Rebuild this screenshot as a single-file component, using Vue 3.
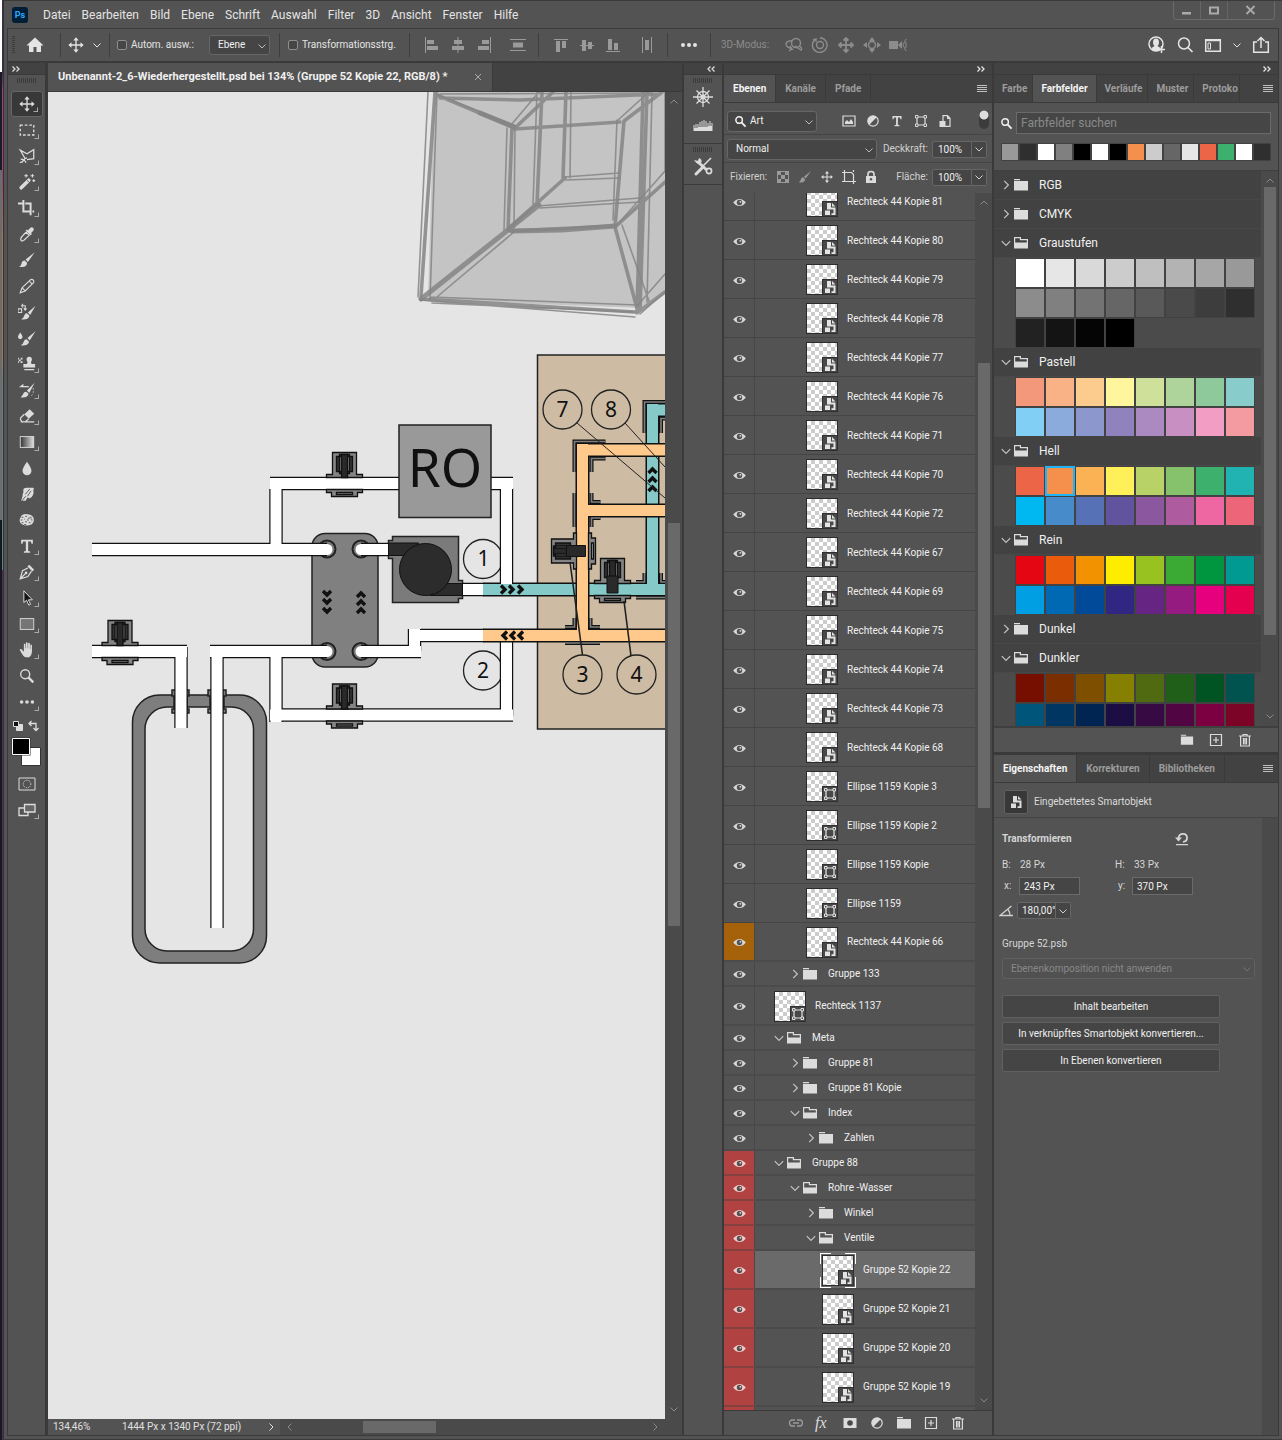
<script setup>
import { ref } from 'vue'

const menus = ['Datei', 'Bearbeiten', 'Bild', 'Ebene', 'Schrift', 'Auswahl', 'Filter', '3D', 'Ansicht', 'Fenster', 'Hilfe']

const tools = [
  ['move', 1], ['marquee', 1], ['lasso', 1], ['wand', 1], ['crop', 1], ['eyedrop', 1], ['brush', 0], ['pencil', 0],
  ['replace', 0], ['mixer', 0], ['stamp', 1], ['history', 1], ['eraser', 1], ['gradient', 1], ['drop', 0], ['smudge', 0],
  ['sponge', 0], ['type', 1], ['pen', 1], ['arrow', 1], ['rect', 1], ['hand', 1], ['zoom', 0], ['dots', 1]
]

const smart = (name, level = 2, extra = {}) => ({ kind: 'smart', name, level, ...extra })
const shape = (name, level = 2, extra = {}) => ({ kind: 'shape', name, level, ...extra })
const group = (name, level, open, extra = {}) => ({ kind: 'group', name, level, open, ...extra })

const layers = [
  ...[81, 80, 79, 78, 77, 76, 71, 70, 72, 67, 69, 75, 74, 73, 68].map(n => smart('Rechteck 44 Kopie ' + n)),
  shape('Ellipse 1159 Kopie 3'),
  shape('Ellipse 1159 Kopie 2'),
  shape('Ellipse 1159 Kopie'),
  shape('Ellipse 1159'),
  smart('Rechteck 44 Kopie 66', 2, { tag: 'orange' }),
  group('Gruppe 133', 1, false),
  shape('Rechteck 1137', 0),
  group('Meta', 0, true),
  group('Gruppe 81', 1, false),
  group('Gruppe 81 Kopie', 1, false),
  group('Index', 1, true),
  group('Zahlen', 2, false),
  group('Gruppe 88', 0, true, { tag: 'red' }),
  group('Rohre -Wasser', 1, true, { tag: 'red' }),
  group('Winkel', 2, false, { tag: 'red' }),
  group('Ventile', 2, true, { tag: 'red' }),
  smart('Gruppe 52 Kopie 22', 3, { tag: 'red', selected: true }),
  smart('Gruppe 52 Kopie 21', 3, { tag: 'red' }),
  smart('Gruppe 52 Kopie 20', 3, { tag: 'red' }),
  smart('Gruppe 52 Kopie 19', 3, { tag: 'red' })
]

const recent = ['#999999', '#2f2f2f', '#ffffff', '#808080', '#000000', '#ffffff', '#000000', '#f58f4c', '#cccccc', '#666666', '#e6e6e6', '#ec6547', '#3eb06d', '#ffffff', '#2f2f2f']

const palettes = [
  { name: 'RGB' },
  { name: 'CMYK' },
  { name: 'Graustufen', colors: ['#ffffff', '#e6e6e6', '#d9d9d9', '#cccccc', '#bfbfbf', '#b3b3b3', '#a6a6a6', '#999999', '#8c8c8c', '#808080', '#737373', '#666666', '#595959', '#4a4a4a', '#3d3d3d', '#2f2f2f', '#222222', '#141414', '#050505', '#000000'] },
  { name: 'Pastell', colors: ['#f4987c', '#f8b286', '#fccb8e', '#fff59c', '#cee09a', '#aed49b', '#8dc99b', '#88cccb', '#82cff5', '#8aabdb', '#8c97ce', '#9083bd', '#aa8ac1', '#c78fc2', '#f29dc4', '#f49ba1'] },
  { name: 'Hell', colors: ['#ec6547', '#f58f4c', '#fab255', '#fff05a', '#b8d267', '#86c16c', '#3eb06d', '#20b3b1', '#00b8f1', '#488bca', '#5671b5', '#62539f', '#8b579f', '#af5b9f', '#ee66a2', '#ec6578'], active: 1 },
  { name: 'Rein', colors: ['#e40613', '#ea5b0c', '#f39200', '#ffed00', '#98c21f', '#3baa35', '#009640', '#009a93', '#009fe3', '#0069b4', '#004a99', '#312783', '#662483', '#951b81', '#e6007e', '#e5004f'] },
  { name: 'Dunkel' },
  { name: 'Dunkler', colors: ['#760f00', '#7b2f00', '#7f4f00', '#868000', '#4f6a10', '#1f5f1a', '#005322', '#00534f', '#00567a', '#003762', '#002553', '#1c0d44', '#380a44', '#520543', '#7c0041', '#7b0427'] }
]

const autoSelect = ref(false)
const showControls = ref(false)
const layerOpacity = ref('100%')
const layerFill = ref('100%')
const posX = ref('243 Px')
const posY = ref('370 Px')
const angle = ref('180,00°')
</script>

<template>
  <svg class="defs" aria-hidden="true">
    <symbol id="i-move" viewBox="0 0 20 20"><path d="M10 3v14M3 10h14" stroke="currentColor" stroke-width="1.5" /><path d="M10 1.500 7 5h6zM10 18.500 7 15h6zM1.500 10 5 7v6zM18.500 10 15 7v6z" fill="currentColor" /></symbol>
    <symbol id="i-marquee" viewBox="0 0 20 20"><rect x="2.500" y="4.500" width="15" height="11" fill="none" stroke="currentColor" stroke-width="1.500" stroke-dasharray="3 2" /></symbol>
    <symbol id="i-lasso" viewBox="0 0 20 20"><path d="M8 13 2.500 3.500l7.500 4L17.500 3v10l-7.500 1M2 17q3 .5 4-2t4-3M3 13.500q4 0 6 4" fill="none" stroke="currentColor" stroke-width="1.400" /></symbol>
    <symbol id="i-wand" viewBox="0 0 20 20"><path d="m3.500 16.500 8.500-8.500" stroke="currentColor" stroke-width="4" stroke-linecap="round" /><path d="m10 8 2.500 2.500" stroke="#535353" /><path d="M9 1v4M7 3h4M16 1v4M14 3h4M17.500 7v3M16 8.500h3" stroke="currentColor" stroke-width="1.200" /></symbol>
    <symbol id="i-crop" viewBox="0 0 20 20"><path d="M6 1v13h8M0 5h5M8 5h6v13M16 14h2" fill="none" stroke="currentColor" stroke-width="2.200" /></symbol>
    <symbol id="i-eyedrop" viewBox="0 0 20 20"><path d="m9 8 3.500 3.500-6 5.500q-3 2-3.500-1Q2.500 14 9 8z" fill="none" stroke="currentColor" stroke-width="1.400" /><path d="m8.500 6 5.500 5.500 1.500-1.500-1-1 2.500-2.500q1.500-2-.3-3.500-1.700-1.300-3.300.3L11 6l-1-1z" fill="currentColor" /></symbol>
    <symbol id="i-brush" viewBox="0 0 20 20"><path d="M18.500 1.500 8.500 9.500l2.500 2.800zM7.500 10.500q-3 0-3.500 3T1 17.500q6 1 8-1.500 1.500-1.500.8-3.200z" fill="currentColor" /></symbol>
    <symbol id="i-pencil" viewBox="0 0 20 20"><path d="m2.500 17.500 2-5.500L14 3q1.500-1 3 .5T17 6.500L8 15.500zM12.500 4.500 16 8M4.500 12l3.500 3.500" fill="none" stroke="currentColor" stroke-width="1.300" /></symbol>
    <symbol id="i-replace" viewBox="0 0 20 20"><path d="M19.500 3 11 10.500l2.500 2.800zM10 11.500q-2.500 0-3 2.500T3.500 18q6.500 1 8.500-2 1-1.300.3-2.500z" fill="currentColor" /><path d="M0 6.500h4v4H0zM4 3h4v4M4 3l1.500-2M4 3l1.500 2M6.500 6 8 8l1.500-2" fill="none" stroke="currentColor" stroke-width="1.200" /></symbol>
    <symbol id="i-mixer" viewBox="0 0 20 20"><path d="M19.500 2.500 10.500 10l2.500 2.800zM9.500 11.500q-2.500 0-3 2.500T3 18q6.500 1 8.500-2 1-1.300.3-2.500zM2.500 4Q-.5 8 0 9.500 1 11.500 2.500 11.500T5 9.500Q5.500 8 2.500 4z" fill="currentColor" /></symbol>
    <symbol id="i-stamp" viewBox="0 0 20 20"><path d="M10 10q1.500-2-.5-4.500 0-3.500 3-3.500t3 3.500q-2 2.500-.5 4.500H19v4H6v-4zM7 15.500h11V17H7z" fill="currentColor" /><path d="M-1 3h2v2h-2zM3 3h2v2H3zM1 5h2v2H1zM-1 7h2v2h-2zM3 7h2v2H3z" fill="currentColor" /></symbol>
    <symbol id="i-history" viewBox="0 0 20 20"><path d="M18.500 2 10 10.500l2.500 2.800zM9 12q-2.500 0-3 2T3 18q6 1 8-2 1-1.300.3-2.500zM1 7l5-4v2.500h6V7z" fill="currentColor" /><path d="M17 8v5q-1 3-4 4" fill="none" stroke="currentColor" stroke-dasharray="1.500 2" /></symbol>
    <symbol id="i-eraser" viewBox="0 0 20 20"><path d="m7 8 6-5.500 5 5-6 5.500z" fill="currentColor" /><path d="m7 8-4 4q-1 1.500.5 3l1 1.500H8l4-3.500M3 16.500h15" fill="none" stroke="currentColor" stroke-width="1.400" /></symbol>
    <symbol id="i-gradient" viewBox="0 0 20 20"><linearGradient id="fade"><stop stop-color="#333" /><stop offset="1" stop-color="#e0e0e0" /></linearGradient><rect x="2.500" y="4" width="15" height="12" fill="url(#fade)" stroke="currentColor" /></symbol>
    <symbol id="i-drop" viewBox="0 0 20 20"><path d="M10 3Q5 10 5 13t2.500 4.500q2.500 1 5 0Q15 16 15 13t-5-10z" fill="currentColor" /></symbol>
    <symbol id="i-smudge" viewBox="0 0 20 20"><path d="M6.500 4q1-1 3-1H17q1.500 1 0 2.500 1 4-.5 6-1 2.500-4 3.500l-1.500-1.500Q9 16 8.500 17.500H3.500q1-3 1.500-5 0-3 1-4.500-.5-2.500.5-4z" fill="currentColor" /><path d="m8 10.500 5-6M10.500 12.500l4-6M8.500 12.500l-4 5" stroke="#535353" /></symbol>
    <symbol id="i-sponge" viewBox="0 0 20 20"><path d="M4 5q3-2 6-1.500 5 0 7 3.500 2 5-2 8-6 2-10 0-4-2-3-6z" fill="currentColor" /><path d="M4 7h2m2-1h2m3 1h2M3 10h2m2-1h1m2 1h2m2-1h2M4 13h2m2-1h2m2 1h2m1-2h1M7 15h2m2-7h2" stroke="#535353" /></symbol>
    <symbol id="i-type" viewBox="0 0 20 20"><path d="M3.500 3h13v4.500H15L14.300 5h-3v10.500l2.200.5v1.500h-7V16l2.200-.5V5h-3L5 7.500H3.500z" fill="currentColor" /></symbol>
    <symbol id="i-pen" viewBox="0 0 20 20"><path d="M12.500 2 18 7.500 16 9.500 10.500 4z" fill="currentColor" /><path d="M11 5.500 5 8.500 2.500 17.500 11 15l4-6M3 17l5.500-5.500" fill="none" stroke="currentColor" stroke-width="1.400" /><circle cx="9" cy="11" r="1.500" fill="currentColor" /></symbol>
    <symbol id="i-arrow" viewBox="0 0 20 20"><path d="M6.500 2v13l3-2.500L12 18l2-1-2.500-5H16z" fill="#161616" stroke="currentColor" stroke-width="1.100" /></symbol>
    <symbol id="i-rect" viewBox="0 0 20 20"><rect x="2.500" y="4" width="15" height="12" fill="#757575" stroke="currentColor" /></symbol>
    <symbol id="i-hand" viewBox="0 0 20 20"><path d="M6.500 10V4q0-1 .8-1t.9 1v4h.5V2.500q0-1 1-1t1 1V8h.5V3q0-1 1-1t1 1v6h.5V5q0-1 .8-1t1 1v7q0 4-3 6H8q-2-1-3.500-3.500L2 10q0-1.500 1.500-1L6.500 12z" fill="currentColor" /></symbol>
    <symbol id="i-zoom" viewBox="0 0 20 20"><circle cx="8" cy="8" r="5" fill="none" stroke="currentColor" stroke-width="1.500" /><path d="m11.500 11.500 5.500 5.500" stroke="currentColor" stroke-width="2.600" /></symbol>
    <symbol id="i-dots" viewBox="0 0 20 20"><g fill="currentColor"><circle cx="4" cy="10" r="2" /><circle cx="10" cy="10" r="2" /><circle cx="16" cy="10" r="2" /></g></symbol>
    <symbol id="i-home" viewBox="0 0 20 20"><path d="M10 2.500 1.500 10.500H4V17h4.500v-5h3v5H16v-6.500h2.500z" fill="currentColor" /></symbol>
    <symbol id="i-chev" viewBox="0 0 10 10"><path d="m1.500 3.500 3.500 3.500 3.500-3.500" fill="none" stroke="currentColor" /></symbol>
    <symbol id="i-folder" viewBox="0 0 16 14"><path d="M1 1h6v1.200H1zM1 3h14v9.500H1z" fill="currentColor" /></symbol>
    <symbol id="i-folder-open" viewBox="0 0 16 14"><path d="M1.600 12V1.600h5.800v2h7V7" fill="none" stroke="currentColor" stroke-width="1.200" /><path d="M1 6.500h14V12.500H1z" fill="currentColor" /></symbol>
    <symbol id="i-eye" viewBox="0 0 14 10"><path d="M0 5q3-4 7-4t7 4q-3 4-7 4T0 5z" fill="currentColor" /><circle cx="7" cy="5" r="3" fill="#535353" /><circle cx="8" cy="4.300" r="1.100" fill="currentColor" /></symbol>
    <symbol id="i-smart" viewBox="0 0 14 14"><path d="M4 1h4v4.500h4.500V13H8.500v-1.800h2V7.500H4z" fill="currentColor" /><path d="M9 1l3.500 3.500H9zM2 8.500h5V13H2z" fill="currentColor" /></symbol>
    <symbol id="i-shape" viewBox="0 0 14 14"><path d="M3 3h8v8H3z" fill="none" stroke="currentColor" stroke-width="1.200" /><g fill="#484848" stroke="currentColor"><path d="M1.500 1.500h2.500v2.500H1.500zM10 1.500h2.500v2.500H10zM1.500 10h2.500v2.500H1.500zM10 10h2.500v2.500H10z" /></g></symbol>
    <symbol id="i-plus" viewBox="0 0 14 14"><path d="M1.500 1.500h11v11h-11zM7 4v6M4 7h6" fill="none" stroke="currentColor" stroke-width="1.200" /></symbol>
    <symbol id="i-trash" viewBox="0 0 14 14"><path d="M1 3h12M5 3V1.500h4V3M2.600 3.500v9.500h8.800V3.500M5.500 5v6.500M8.500 5v6.500M7 5v6.500" fill="none" stroke="currentColor" stroke-width="1.200" /></symbol>
    <symbol id="i-burger" viewBox="0 0 12 10"><path d="M1 1.500h10M1 3.500h10M1 5.500h10M1 7.500h10" stroke="currentColor" /></symbol>
    <symbol id="i-half" viewBox="0 0 14 14"><circle cx="7" cy="7" r="5.200" fill="none" stroke="currentColor" stroke-width="1.200" /><path d="M3.300 10.700A5.200 5.200 0 0 1 10.700 3.300z" fill="currentColor" /></symbol>
    <symbol id="i-find" viewBox="0 0 14 14"><circle cx="5.500" cy="5.500" r="3.500" fill="none" stroke="currentColor" stroke-width="1.600" /><path d="m8 8 4.500 4.500" stroke="currentColor" stroke-width="2" /></symbol>
    <symbol id="i-more" viewBox="0 0 10 10"><path d="m1.500 2.500 2.500 2.500-2.500 2.500M5.500 2.500 8 5 5.500 7.500" fill="none" stroke="currentColor" stroke-width="1.300" /></symbol>
    <symbol id="valve" viewBox="-20 -34 40 50" overflow="visible">
      <g stroke="#111" stroke-width="1.300" fill="#858585">
        <path d="M-12-31v22h-6v3h36v-3h-6v-22z" />
        <path d="M-18 6h36v3h-5v4h-26v-4h-5z" /><path d="M-8 9H8v2H-8z" fill="#aaa" />
        <path d="M-8-27H8v15H-8zM-5-29v19H5v-19z" fill="#333" /><path d="M-3-29h6v23h-6z" fill="#292929" />
      </g>
    </symbol>
  </svg>

  <div class="shell">
    <div class="desktop"></div>
    <div class="window">
      <header class="titlebar">
        <span class="logo">Ps</span>
        <nav class="menu"><a v-for="m in menus" :key="m" href="#">{{ m }}</a></nav>
        <div class="winbtns">
          <button aria-label="Minimieren"><svg viewBox="0 0 14 14"><path d="M2 9h9v2.500H2z" fill="#aaa" /></svg></button>
          <button aria-label="Maximieren"><svg viewBox="0 0 14 14"><path d="M3 4.500h8v6H3z" fill="none" stroke="#aaa" stroke-width="2" /></svg></button>
          <button aria-label="Schließen"><svg viewBox="0 0 14 14"><path d="m2.500 3 8 8M10.500 3l-8 8" stroke="#aaa" stroke-width="1.800" /></svg></button>
        </div>
      </header>

      <div class="options">
        <div class="grp g-home"><i class="vgrip"></i><svg class="i20"><use href="#i-home" /></svg></div>
        <div class="grp g-tool"><svg class="i16"><use href="#i-move" /></svg><svg class="i10"><use href="#i-chev" /></svg></div>
        <div class="grp g-auto">
          <label><input v-model="autoSelect" type="checkbox">Autom. ausw.:</label>
          <div class="sel sel-auto"><select aria-label="Automatische Auswahl"><option>Ebene</option></select><svg class="i10"><use href="#i-chev" /></svg></div>
        </div>
        <div class="grp g-ctrl"><label><input v-model="showControls" type="checkbox">Transformationsstrg.</label></div>
        <div class="grp g-align dim">
          <svg viewBox="0 0 16 16"><path d="M1.500 0v16" stroke="currentColor" /><path d="M3 3h7v4H3zM3 9h11v4H3z" fill="currentColor" /></svg>
          <svg viewBox="0 0 16 16"><path d="M8 0v16" stroke="currentColor" /><path d="M4 3h8v4H4zM2 9h12v4H2z" fill="currentColor" /></svg>
          <svg viewBox="0 0 16 16"><path d="M14.500 0v16" stroke="currentColor" /><path d="M6 3h7v4H6zM2 9h11v4H2z" fill="currentColor" /></svg>
          <svg class="far" viewBox="0 0 16 16"><path d="M0 2.500h16M0 13.500h16" stroke="currentColor" /><path d="M3 5.500h10v5H3z" fill="currentColor" /></svg>
        </div>
        <div class="grp g-align dim">
          <svg viewBox="0 0 16 16"><path d="M1 2.500h14" stroke="currentColor" /><path d="M3 4h4v11H3zM9 4h4v7H9z" fill="currentColor" /></svg>
          <svg viewBox="0 0 16 16"><path d="M1 8.500h14" stroke="currentColor" /><path d="M3 3h4v11H3zM9 5h4v7H9z" fill="currentColor" /></svg>
          <svg viewBox="0 0 16 16"><path d="M1 14.500h14" stroke="currentColor" /><path d="M3 2h4v11H3zM9 6h4v7H9z" fill="currentColor" /></svg>
          <svg class="far" viewBox="0 0 16 16"><path d="M3.500 0v16M12.500 0v16" stroke="currentColor" /><path d="M6 3h4v10H6z" fill="currentColor" /></svg>
        </div>
        <div class="grp g-dots"><svg class="i20"><use href="#i-dots" /></svg></div>
        <div class="modes">
          <span>3D-Modus:</span>
          <svg viewBox="0 0 18 16"><g fill="none" stroke="currentColor" stroke-width="1.400"><circle cx="11" cy="6" r="4.500" /><path d="M8 3.500Q1 4 1 7t6 5l-2-3M7 12l-3 2M14 9q4 2 2 4l-6-4" /></g></svg>
          <svg viewBox="0 0 18 16"><g fill="none" stroke="currentColor" stroke-width="1.400"><circle cx="9" cy="8" r="3.500" /><path d="M4 2.500A7.300 7.300 0 1 0 9 .8M2 3l3-1v3" /></g></svg>
          <svg viewBox="0 0 18 16"><path d="M9 1v14M2 8h14M6.500 3.500 9 1l2.500 2.500M6.500 12.500 9 15l2.500-2.500M4.500 5.500 2 8l2.500 2.500M13.500 5.500 16 8l-2.500 2.500" fill="none" stroke="currentColor" stroke-width="1.800" /></svg>
          <svg viewBox="0 0 18 16"><path d="M9 0 6 4h6zM9 16l-3-4h6zM0 8l4-3v6zM18 8l-4-3v6z" fill="currentColor" /><circle cx="9" cy="8" r="3.500" fill="none" stroke="currentColor" stroke-width="1.400" /></svg>
          <svg viewBox="0 0 18 16"><path d="M0 4h9v8H0zM9 8l4-4v8z" fill="currentColor" /><path d="m17 2-3 6 3 6M17 5v6" fill="none" stroke="currentColor" /></svg>
        </div>
        <div class="right-tools">
          <svg viewBox="0 0 18 18"><circle cx="8" cy="8" r="7" fill="none" stroke="currentColor" stroke-width="1.500" /><path d="M8 2.500q-3 0-3 4 0 2 1.500 3.500l-3 2Q5 15 8 15t4.500-3l-3-2Q11 8.500 11 6.500q0-4-3-4z" fill="currentColor" /><path d="M13.500 10v7M10 13.500h7" stroke="currentColor" stroke-width="1.500" /></svg>
          <svg viewBox="0 0 18 18"><circle cx="8" cy="7.500" r="5.500" fill="none" stroke="currentColor" stroke-width="1.500" /><path d="m12 11.500 4.500 4.500" stroke="currentColor" stroke-width="1.700" /></svg>
          <svg viewBox="0 0 18 18"><path d="M1.700 3.700h14.600v11.600H1.700zM1 4.500h16" fill="none" stroke="currentColor" stroke-width="1.500" /><path d="M4 7h2.500v6H4z" fill="none" stroke="currentColor" /></svg>
          <svg class="i10"><use href="#i-chev" /></svg>
          <svg viewBox="0 0 18 18"><path d="M5 6H1.700v10.300h14.600V6H13M9 12V2M5.500 5 9 1.500 12.500 5" fill="none" stroke="currentColor" stroke-width="1.500" /></svg>
        </div>
      </div>

      <main class="work">
        <aside class="toolbar">
          <div class="dockhead"><svg class="i10"><use href="#i-more" /></svg></div>
          <i class="hgrip"></i>
          <button v-for="(t, i) in tools" :key="t[0]" class="tool" :class="{ on: i === 0, sub: t[1] }" :aria-label="t[0]"><svg class="i18"><use :href="'#i-' + t[0]" /></svg></button>
          <div class="mini">
            <svg viewBox="0 0 12 12"><path d="M4.500 4.500h6v6h-6z" fill="#ddd" stroke="#ddd" /><path d="M1.500 1.500h5v5h-5z" fill="#111" stroke="#ddd" /></svg>
            <svg viewBox="0 0 12 12"><path d="M3.500 1 1 3.500 3.500 6M1 3.500h7v7M5.500 8 8 10.500 10.500 8" fill="none" stroke="#ddd" stroke-width="1.300" /></svg>
          </div>
          <svg class="fgbg" viewBox="0 0 30 30"><path d="M10.500 10.500h19v18h-19z" fill="#fff" stroke="#333" /><path d="M.5.500h19v18H.5z" fill="#333" /><path d="M1.500 1.500h17v16h-17z" fill="#000" stroke="#fff" /></svg>
          <button class="tool mask" aria-label="Maskierungsmodus"><svg viewBox="0 0 18 14"><path d="M1 1h16v12H1z" fill="none" stroke="#ddd" /><circle cx="9" cy="7" r="3.800" fill="none" stroke="#ddd" stroke-dasharray="1 1" /></svg></button>
          <button class="tool sub" aria-label="Bildschirmmodus"><svg viewBox="0 0 18 14"><path d="M1 5h9v7.500H1z" fill="none" stroke="#ddd" stroke-width="1.300" /><path d="M6.500 1.500h10.500v7.500H6.500z" fill="#666" stroke="#ddd" stroke-width="1.300" /></svg></button>
        </aside>

        <section class="document">
          <div class="doctabs"><div class="doctab">Unbenannt-2_6-Wiederhergestellt.psd bei 134% (Gruppe 52 Kopie 22, RGB/8) *<button aria-label="Schließen"><svg viewBox="0 0 8 8"><path d="m1 1 6 6M7 1 1 7" stroke="#aaa" /></svg></button></div></div>
          <div class="view">
            <div class="canvas">
              <svg class="art" width="617" height="1326" viewBox="48 92 617 1326">
                <path d="M434 92 428 300l212 8 25-17V92z" fill="#c4c4c4" />
                <g fill="none" stroke="#858585" stroke-opacity=".85" stroke-linecap="round">
                  <path stroke-width="1.600" d="M428 92 418 297M437 92 430 300M420 300l215 17M430 297l207 8M432 303l202 9M438 95l76 30M511 125l28-33M507 128l-3 102M515 128l-1 100M514 232l-76 64M537 92l-4 112M571 92l-1 86M565 177l54-4M538 206l102-8M617 120l-4 100M617 121l33-30M652 92l-5 210M617 225l48-54M622 225l27 76M637 306l28-32M640 314l25-22M440 94l210-1M566 180l54-2M540 208l100-6M665 92v80" />
                  <path stroke-width="3.600" d="M435 92 421 296M421 299l214 13M437 95l78 33M515 128l38-36M512 128l-4 102M508 229l57-51M542 92l-5 112M566 92l-3 86M515 129l105-7M440 98l80 2 140-6M624 121l-9 106M624 121l38-29M643 92l-6 221M647 92l-7 218M615 227l50-45M615 227l23 85M638 312l27-20M510 231l105-5" />
                  <path stroke-width="5" d="M508 230 421 299M509 229l30-24M512 231l50-1 53-4M480 113l34 14" />
                </g>

                <rect x="537.500" y="355" width="140" height="374" fill="#cdbba3" stroke="#222" stroke-width="1.500" />
                <g stroke="#222" stroke-width="1.500">
                  <rect x="132.500" y="695" width="134" height="268" rx="27" fill="#7e7e7e" />
                  <rect x="145" y="707" width="108.500" height="244" rx="22" fill="#e5e5e5" />
                  <path d="M172 690h17v6h-2v13h2v4h-17v-4h2v-13h-2zM208 690h18v6h-2v13h2v4h-18v-4h2v-13h-2z" fill="#7e7e7e" />
                  <rect x="312" y="533.500" width="66" height="133.500" rx="13" fill="#808080" />
                  <g fill="#777" stroke-width="2"><circle cx="327" cy="549" r="8.500" /><circle cx="361" cy="549" r="8.500" /><circle cx="327" cy="651.500" r="8.500" /><circle cx="361" cy="651.500" r="8.500" /></g>
                  <path d="M392.500 536.500h66v44h4v18h-4v4h-66v-44h-4v-18h4z" fill="#7b7b7b" />
                </g>
                <g fill="none" stroke="#222" stroke-width="1.300"><circle cx="483" cy="559" r="19.500" /><circle cx="483" cy="670.500" r="19.500" /></g>

                <g fill="none">
                  <path stroke="#111" stroke-width="13.400" d="M92 549.500h235M361 549.500h28M276 489v55M270 483.500h130M491 483.500h22M506.500 488v96M462 589.500h22M92 651.500h95M181 647v81M210 651.500h117M217 657v271M361 651.500h60M414.500 629v22M421 635.500h63M276 658v64M276 715h237M506.500 640v76" />
                  <path stroke="#fff" stroke-width="11" stroke-linecap="round" d="M322 549.500h5M322 651.500h5M361 549.500h5M361 651.500h5" />
                  <path stroke="#fff" stroke-width="11" d="M92 549.500h235M361 549.500h28M276 478v70M270 483.500h130M491 483.500h22M506.500 486v102M462 589.500h22M92 651.500h95M181 646v82M210 651.500h117M217 646v282M361 651.500h60M414.500 629v28M410 635.500h74M276 650v72M270 715h243M506.500 640v80" />
                  <path stroke="#111" stroke-width="14" d="M483 589.500h182M665 410h-19M652.500 403v182" />
                  <path stroke="#85cac8" stroke-width="11" d="M483 589.500h182M665 410h-18M652.500 404v190" />
                  <path stroke="#111" stroke-width="14" d="M483 635.500h182M582.500 443v192M576 450h89M582 510.500h83" />
                  <path stroke="#ffc98b" stroke-width="11" d="M483 635.500h182M582.500 444v192M577 450h88M582 510.500h83" />
                  <path stroke="#fff" stroke-width="11" d="M506.500 486v98" />
                </g>
                <g fill="none">
                  <path stroke="#111" stroke-width="4" d="M574.500 472v-30.500h31M591.500 472v-13.500h14M574.500 493v34M591.500 493v9h9M591.500 527v-9h9M565 627h9.500v-9M600 627h-9.500v-9M565 643h35M644.500 433v-31H665M661 433v-14.500h4M636 582h8.500v-9M661 573v9h4M636 597.500h29" />
                  <path stroke="#808080" stroke-width="1.600" d="M574.500 472v-30.500h31M591.500 472v-13.500h14M574.500 493v34M591.500 493v9h9M591.500 527v-9h9M565 627h9.500v-9M600 627h-9.500v-9M565 643h35M644.500 433v-31H665M661 433v-14.500h4M636 582h8.500v-9M661 573v9h4M636 597.500h29" />
                </g>

                <g fill="#2c2c2c" stroke="#111">
                  <path d="M388.500 543h30l4 12.500h-34zM432 583.500h30.500v12H430z" /><circle cx="425.500" cy="569.500" r="26" />
                </g>
                <rect x="399" y="425" width="92" height="92.500" fill="#999" stroke="#222" stroke-width="1.500" />
                <text x="445" y="487" font-size="53" text-anchor="middle">RO</text>

                <use href="#valve" x="324.500" y="449.500" width="40" height="50" />
                <use href="#valve" x="100" y="617.500" width="40" height="50" />
                <use href="#valve" x="324.500" y="681" width="40" height="50" />
                <use href="#valve" x="592.500" y="555.500" width="40" height="50" />
                <path d="M607 576h11v17h-11z" fill="#2a2a2a" stroke="#111" />
                <g transform="rotate(-90 582.500 551)"><use href="#valve" x="562.500" y="517" width="40" height="50" /><path d="M577 535h11v19h-11z" fill="#2a2a2a" stroke="#111" /></g>

                <g fill="none" stroke="#111" stroke-width="3.400">
                  <path d="M323 591l4 4 4-4M323 599l4 4 4-4M323 608l4 4 4-4M357 597l4-4 4 4M357 605l4-4 4 4M357 613l4-4 4 4" />
                  <path d="M501 585.500l4 4-4 4M509 585.500l4 4-4 4M518 585.500l4 4-4 4M507 631.500l-4 4 4 4M515 631.500l-4 4 4 4M523 631.500l-4 4 4 4" />
                  <path d="M648.500 473l4-4 4 4M648.500 482l4-4 4 4M648.500 491l4-4 4 4" />
                </g>
                <g fill="none" stroke="#222" stroke-width="1.300">
                  <circle cx="562.500" cy="409.500" r="19.500" /><circle cx="611" cy="409.500" r="19.500" /><circle cx="582.500" cy="674.500" r="19.500" /><circle cx="636.500" cy="674.500" r="19.500" />
                  <path d="m577 423 88 75M625 423l40 44" stroke-width="1" /><path d="m570 562 12.500 93M624 601l7 55" stroke-width="1.600" />
                </g>
                <g font-size="21" text-anchor="middle">
                  <text x="562.500" y="417">7</text><text x="611" y="417">8</text><text x="483.500" y="566">1</text><text x="483" y="678">2</text><text x="582.500" y="682">3</text><text x="636.500" y="682">4</text>
                </g>
              </svg>
            </div>
            <div class="vscroll doc"><svg class="i10 up"><use href="#i-chev" /></svg><b></b><svg class="i10"><use href="#i-chev" /></svg></div>
          </div>
          <footer class="status">
            <span class="pct">134,46%</span><span class="dims">1444 Px x 1340 Px (72 ppi)</span><svg class="i10 rt"><use href="#i-chev" /></svg>
            <div class="hscroll"><svg class="i10 lt"><use href="#i-chev" /></svg><b></b><svg class="i10 rt"><use href="#i-chev" /></svg></div>
          </footer>
        </section>

        <aside class="icondock">
          <div class="dockhead end"><svg class="i10 flip"><use href="#i-more" /></svg></div>
          <div class="idgroup tall"><i class="hgrip"></i>
            <svg viewBox="0 0 20 20"><g fill="none" stroke="currentColor" stroke-width="1.300"><circle cx="10" cy="10" r="5.500" /><path d="M10 0v20M0 10h20M3.500 3.500l13 13M16.500 3.500l-13 13" /></g><circle cx="10" cy="10" r="2.500" fill="currentColor" /></svg>
            <svg viewBox="0 0 20 20"><path d="M.5 15V9h1v3h1V8h1v4h1V8h1v3h1V6h1v5h1V5h1v6h1V4h1v7h1V5h1v6h1V7h1v3h1V5h1v5h1V7h1v8z" fill="currentColor" /></svg>
          </div>
          <div class="idgroup"><i class="hgrip"></i>
            <svg viewBox="0 0 20 20"><path d="m5 5 11 10M9 11l-6 6" stroke="currentColor" stroke-width="3" stroke-linecap="round" /><path d="m18 1-9 9" stroke="currentColor" stroke-width="1.600" /><path d="M1 3l4 1 1-3q4 2 2 5-3 3-7-3z" fill="currentColor" /><circle cx="16" cy="14" r="2.600" fill="#535353" stroke="currentColor" stroke-width="1.600" /></svg>
          </div>
        </aside>

        <section class="panel layers">
          <div class="dockhead end"><svg class="i10"><use href="#i-more" /></svg></div>
          <div class="tabs t3"><button class="on">Ebenen</button><button>Kanäle</button><button>Pfade</button><svg class="burger"><use href="#i-burger" /></svg></div>
          <div class="lrow filter">
            <div class="sel sel-art"><svg class="find"><use href="#i-find" /></svg><select aria-label="Filtertyp"><option>Art</option></select><svg class="i10"><use href="#i-chev" /></svg></div>
            <div class="icons24">
              <svg viewBox="0 0 14 14"><path d="M1 2h12v10H1z" fill="none" stroke="currentColor" stroke-width="1.200" /><path d="M3 10V8l2-2 2 2 2-3 2 3v2z" fill="currentColor" /></svg>
              <svg><use href="#i-half" /></svg>
              <svg viewBox="0 0 20 20"><use href="#i-type" width="20" height="20" /></svg>
              <svg><use href="#i-shape" /></svg>
              <svg viewBox="0 0 14 14"><path d="M5 1.600h4.500L12 4.200v8.200H5z" fill="none" stroke="currentColor" stroke-width="1.200" /><path d="M9 1v4h3.500zM1.500 7h6v6h-6z" fill="currentColor" /></svg>
            </div>
            <span class="toggle"></span>
          </div>
          <div class="lrow blend">
            <div class="sel sel-blend"><select aria-label="Füllmethode"><option>Normal</option></select><svg class="i10"><use href="#i-chev" /></svg></div>
            <label class="num">Deckkraft:<input v-model="layerOpacity"><span><svg class="i10"><use href="#i-chev" /></svg></span></label>
          </div>
          <div class="lrow lock">
            <span class="fix">Fixieren:</span>
            <div class="icons22">
              <svg class="dim" viewBox="0 0 14 14"><path d="M1.500 1.500h11v11h-11z" fill="none" stroke="currentColor" /><path d="M1 1h4v4H1zM9 1h4v4H9zM5 5h4v4H5zM1 9h4v4H1zM9 9h4v4H9z" fill="currentColor" /></svg>
              <svg class="dim"><use href="#i-brush" /></svg>
              <svg><use href="#i-move" /></svg>
              <svg viewBox="0 0 14 14"><path d="M0 2.500h9.500l2 2V14M2.500 0v11.500H14M0 11.500h2M11.500 0v2" fill="none" stroke="currentColor" stroke-width="1.200" /></svg>
              <svg viewBox="0 0 14 14"><path d="M2 6h10v7H2z" fill="currentColor" /><path d="M4 6V4q0-2.500 3-2.500T10 4v2" fill="none" stroke="currentColor" stroke-width="1.600" /><circle cx="7" cy="9.300" r="1.200" fill="#535353" /></svg>
            </div>
            <label class="num">Fläche:<input v-model="layerFill"><span><svg class="i10"><use href="#i-chev" /></svg></span></label>
          </div>
          <div class="listwrap">
            <ul class="list">
              <li v-for="(l, i) in layers" :key="i" :class="[l.kind === 'group' ? 'short' : 'full', l.tag, { selected: l.selected, thick: i > 18 }]">
                <span class="eye"><svg><use href="#i-eye" /></svg></span>
                <div class="cell" :class="'lv' + l.level">
                  <template v-if="l.kind === 'group'">
                    <svg class="i14 tw" :class="{ rt: !l.open }"><use href="#i-chev" /></svg>
                    <svg class="fold"><use :href="l.open ? '#i-folder-open' : '#i-folder'" /></svg>
                  </template>
                  <span v-else class="thumb"><svg class="badge"><use :href="'#i-' + l.kind" /></svg></span>
                  <span class="name">{{ l.name }}</span>
                </div>
              </li>
              <li class="red rest"><span class="eye"></span></li>
            </ul>
            <div class="vscroll lay"><svg class="i10 up"><use href="#i-chev" /></svg><b></b><svg class="i10"><use href="#i-chev" /></svg></div>
          </div>
          <footer class="lfoot">
            <svg class="dim" viewBox="0 0 16 14"><path d="M7 4H4.500Q1.500 4 1.500 7t3 3H7M9 4h2.500q3 0 3 3t-3 3H9M5 7h6" fill="none" stroke="currentColor" stroke-width="1.300" /></svg>
            <em>fx</em>
            <svg viewBox="0 0 16 14"><path d="M1.500 2h13v10h-13z" fill="currentColor" /><circle cx="8" cy="7" r="2.800" fill="#484848" /></svg>
            <svg><use href="#i-half" /></svg>
            <svg><use href="#i-folder" /></svg>
            <svg><use href="#i-plus" /></svg>
            <svg><use href="#i-trash" /></svg>
          </footer>
        </section>

        <div class="rightcol">
          <div class="dockhead end"><svg class="i10"><use href="#i-more" /></svg></div>
          <section class="panel swatches">
            <div class="tabs t5"><button>Farbe</button><button class="on">Farbfelder</button><button>Verläufe</button><button>Muster</button><button class="cut">Protoko</button><svg class="burger"><use href="#i-burger" /></svg></div>
            <label class="search"><svg class="find"><use href="#i-find" /></svg><input type="search" placeholder="Farbfelder suchen" aria-label="Farbfelder suchen"></label>
            <div class="recent"><i v-for="(c, i) in recent" :key="i" :style="{ background: c }"></i></div>
            <div class="palwrap">
              <div class="pals">
                <div v-for="p in palettes" :key="p.name" class="pal">
                  <h3><svg class="i14 tw" :class="{ rt: !p.colors }"><use href="#i-chev" /></svg><svg class="fold"><use :href="p.colors ? '#i-folder-open' : '#i-folder'" /></svg>{{ p.name }}</h3>
                  <div v-if="p.colors" class="chips"><i v-for="(c, i) in p.colors" :key="i" :class="{ on: p.active === i }" :style="{ background: c }"></i></div>
                </div>
              </div>
              <div class="vscroll pal-s"><svg class="i10 up"><use href="#i-chev" /></svg><b></b><svg class="i10"><use href="#i-chev" /></svg></div>
            </div>
            <footer class="pfoot"><svg><use href="#i-folder" /></svg><svg><use href="#i-plus" /></svg><svg><use href="#i-trash" /></svg></footer>
          </section>

          <section class="panel props">
            <div class="tabs t3"><button class="on">Eigenschaften</button><button>Korrekturen</button><button>Bibliotheken</button><svg class="burger"><use href="#i-burger" /></svg></div>
            <div class="kind"><span><svg><use href="#i-smart" /></svg></span>Eingebettetes Smartobjekt</div>
            <div class="pbody">
              <div class="form">
                <div class="thead"><strong>Transformieren</strong><svg viewBox="0 0 14 14"><path d="M3.500 6Q4 1.800 8 1.800t4 4-4 4" fill="none" stroke="currentColor" stroke-width="1.800" /><path d="M0 5.500h7L3.500 9.500zM1 12h12v1.200H1z" fill="currentColor" /></svg></div>
                <div class="pair dimsrow"><span>B:</span><span>28 Px</span><span>H:</span><span>33 Px</span></div>
                <div class="pair xy"><label for="px">x:</label><input id="px" v-model="posX"><label for="py">y:</label><input id="py" v-model="posY"></div>
                <label class="num angle"><svg viewBox="0 0 14 12"><path d="M12.500 1 1 10.500h13M9 4.500q2 2.500 2 6" fill="none" stroke="currentColor" stroke-width="1.300" /></svg><input v-model="angle" aria-label="Winkel"><span><svg class="i10"><use href="#i-chev" /></svg></span></label>
                <p>Gruppe 52.psb</p>
                <div class="sel sel-comp"><select disabled aria-label="Ebenenkomposition"><option>Ebenenkomposition nicht anwenden</option></select><svg class="i10"><use href="#i-chev" /></svg></div>
                <button class="wide">Inhalt bearbeiten</button>
                <button class="wide">In verknüpftes Smartobjekt konvertieren...</button>
                <button class="wide">In Ebenen konvertieren</button>
              </div>
              <div class="pgutter"></div>
            </div>
          </section>
        </div>
      </main>
    </div>
  </div>
</template>

<style>
body { background: #535353; }
</style>

<style scoped>
* { box-sizing: border-box; }
svg { display: block; flex: none; }
button, input, select { font: inherit; color: inherit; margin: 0; padding: 0; border: 0; background: none; border-radius: 0; outline: 0; }
a { color: inherit; text-decoration: none; }
.defs { position: absolute; width: 0; height: 0; }
.shell { display: flex; height: 100vh; font: 10px/14px Roboto, "Noto Sans", sans-serif; color: #e4e4e4; background: #535353; overflow: hidden; }
.desktop { width: 4px; flex: none; border-right: 1px solid #333; background: linear-gradient(#fff 72px, #1a1b26 72px 170px, #6c6c6c 170px 520px, #151a22 520px) 0 0 / 2px 100% no-repeat, linear-gradient(#3a3147 72px, #9a4477 90px 180px, #a07a50 240px 360px, #5e8286 380px 570px, #5f2563 570px); }
.window { flex: 1; min-width: 0; display: flex; flex-direction: column; border-top: 1px solid #3a3a3a; border-bottom: 1px solid #3a3a3a; padding: 0 3px 3px 3px; }
.i10 { width: 10px; height: 10px; }
.i14 { width: 14px; height: 14px; }
.i16 { width: 18px; height: 18px; }
.i18 { width: 18px; height: 18px; }
.i20 { width: 20px; height: 20px; }
.up { transform: rotate(180deg); }
.rt { transform: rotate(-90deg); }
.lt { transform: rotate(90deg); }
.flip { transform: rotate(180deg); }
.dim { color: #9a9a9a; }

.titlebar { height: 27px; flex: none; display: flex; align-items: center; padding-left: 5px; }
.logo { width: 16px; height: 16px; border-radius: 3px; background: #001e36; color: #31a8ff; font-weight: 700; font-size: 9px; line-height: 16px; text-align: center; }
.menu { display: flex; gap: 11px; margin-left: 15px; font-size: 12px; line-height: 26px; }
.winbtns { margin-left: auto; margin-right: 4px; align-self: flex-start; display: flex; height: 19px; border: 1px solid #6a6a6a; border-top: 0; border-radius: 0 0 3px 3px; }
.winbtns button { width: 27px; display: grid; place-items: center; border-right: 1px solid #666; }
.winbtns button:last-child { width: 46px; border: 0; }
.winbtns svg { width: 14px; height: 14px; }

.options { height: 35px; flex: none; display: flex; align-items: center; border: 1px solid #3a3a3a; border-bottom: 2px solid #3a3a3a; }
.grp { height: 24px; flex: none; display: flex; align-items: center; border-right: 1px solid #3e3e3e; }
.g-home { width: 53px; padding-left: 4px; gap: 10px; }
.vgrip { width: 3px; height: 18px; background: repeating-linear-gradient(#3c3c3c 0 1px, transparent 1px 2px); }
.g-tool { width: 49px; padding-left: 6px; gap: 7px; }
.g-auto { width: 170px; padding-left: 7px; justify-content: space-between; padding-right: 9px; }
.g-ctrl { width: 130px; padding-left: 8px; }
.options label { display: flex; align-items: center; gap: 4px; }
input[type=checkbox] { appearance: none; width: 10px; height: 10px; border: 1px solid #8f8f8f; border-radius: 2px; background: #464646; }
.sel { position: relative; display: flex; align-items: center; border: 1px solid #666; border-radius: 3px; background: #454545; height: 20px; color: #f0f0f0; }
.sel select { appearance: none; flex: 1; min-width: 0; height: 18px; padding-left: 8px; opacity: 1; }
.sel > .i10 { position: absolute; right: 2px; top: 5px; pointer-events: none; color: #bbb; }
.sel-auto { width: 61px; }
.g-align { width: 129px; padding-left: 14px; gap: 10px; }
.g-align svg { width: 16px; height: 16px; }
.g-align .far { margin-left: 8px; }
.g-dots { width: 43px; padding-left: 11px; }
.modes { display: flex; align-items: center; gap: 8px; padding-left: 10px; color: #8c8c8c; }
.modes span { width: 56px; }
.modes svg { width: 18px; height: 16px; }
.right-tools { margin-left: auto; padding-right: 8px; display: flex; align-items: center; gap: 10px; }
.right-tools svg { width: 18px; height: 18px; }
.right-tools svg.i10 { width: 10px; height: 10px; }

.work { flex: 1; min-height: 0; display: flex; }
.dockhead { height: 12px; flex: none; display: flex; align-items: center; background: #424242; border-bottom: 1px solid #3a3a3a; padding: 0 3px; }
.dockhead.end { justify-content: flex-end; padding-right: 6px; }
.hgrip { display: block; width: 20px; height: 5px; margin: 3px auto 0; background: repeating-linear-gradient(90deg, #3c3c3c 0 1px, transparent 1px 2px); }

.toolbar { width: 41px; flex: none; border-left: 1px solid #3a3a3a; border-right: 3px solid #3a3a3a; border-bottom: 1px solid #3a3a3a; display: flex; flex-direction: column; color: #dcdcdc; }
.toolbar .hgrip { margin-bottom: 8px; flex: none; }
.tool { position: relative; width: 32px; height: 26px; flex: none; margin: 0 auto 0 3px; display: grid; place-items: center; }
.tool.on { background: #383838; border: 1px solid #666; border-radius: 3px; }
.tool.sub::after { content: ""; position: absolute; right: 4px; bottom: 4px; border: 1px solid #aaa; border-left-color: transparent; border-top-color: transparent; width: 3px; height: 3px; }
.mini { display: flex; justify-content: space-between; padding: 5px 5px 5px 4px; }
.mini svg { width: 12px; height: 12px; }
.fgbg { width: 30px; height: 30px; margin-left: 3px; }
.tool svg { width: 18px; height: 18px; }
.mask { margin-top: 4px; }

.document { flex: 1; min-width: 0; display: flex; flex-direction: column; border-bottom: 1px solid #3a3a3a; }
.doctabs { height: 29px; flex: none; background: #424242; border-bottom: 1px solid #3a3a3a; display: flex; }
.doctab { min-width: 445px; padding: 0 10px; background: #535353; border-right: 1px solid #3a3a3a; font-size: 11px; font-weight: 700; line-height: 28px; color: #f0f0f0; display: flex; align-items: center; justify-content: space-between; gap: 8px; white-space: nowrap; }
.doctab svg { width: 8px; height: 8px; }
.view { flex: 1; min-height: 0; display: flex; }
.canvas { flex: 1; min-width: 0; overflow: hidden; background: #e5e5e5; }
.art { font-family: "Noto Sans", sans-serif; fill: #111; }
.vscroll { width: 17px; flex: none; display: flex; flex-direction: column; align-items: center; background: #4a4a4a; padding: 5px 0; color: #8a8a8a; }
.vscroll b { width: 12px; background: #696969; border-radius: 1px; }
.vscroll .i10:last-child { margin-top: auto; }
.doc b { height: 403px; margin-top: 416px; }
.status { height: 16px; flex: none; display: flex; align-items: center; color: #e0e0e0; }
.pct { width: 74px; padding-left: 5px; }
.dims { width: 144px; }
.hscroll { flex: 1; display: flex; align-items: center; height: 16px; background: #4a4a4a; margin-left: 4px; padding: 0 22px 0 5px; color: #8a8a8a; }
.hscroll b { width: 73px; height: 12px; background: #696969; margin-left: 68px; margin-right: auto; }

.icondock { width: 42px; flex: none; border: solid #3a3a3a; border-width: 0 2px 1px 2px; color: #dcdcdc; }
.idgroup { border-bottom: 1px solid #3a3a3a; display: flex; flex-direction: column; align-items: center; height: 41px; }
.idgroup.tall { height: 69px; }
.idgroup svg { width: 20px; height: 20px; margin-top: 5px; }
.idgroup.tall svg { margin-top: 4px; margin-bottom: 5px; }

.panel { display: flex; flex-direction: column; min-height: 0; }
.layers { width: 268px; flex: none; border-bottom: 1px solid #3a3a3a; }
.tabs { height: 28px; flex: none; display: flex; background: #424242; border-bottom: 1px solid #3a3a3a; overflow: hidden; }
.tabs button { padding: 0 5px 2px 8px; height: 28px; line-height: 25px; font-weight: 700; color: #9c9c9c; border-right: 1px solid #3a3a3a; white-space: nowrap; }
.tabs button.on { background: #535353; color: #f4f4f4; padding-right: 8px; }
.tabs.t3 button { padding: 0 9px 2px; }
.tabs .cut { width: 46px; overflow: hidden; padding-right: 0; text-align: left; }
.burger { width: 12px; height: 10px; margin: 9px 4px 0 auto; color: #c0c0c0; }
.lrow { flex: none; display: flex; align-items: center; border-bottom: 1px solid #444; padding: 0 5px 0 3px; }
.filter { height: 32px; padding-top: 5px; }
.sel-art { width: 90px; padding-left: 6px; height: 21px; }
.sel-art select { padding-left: 3px; }
.find { width: 13px; height: 13px; color: #f0f0f0; }
.icons24 { display: flex; gap: 10px; margin-left: 25px; color: #dcdcdc; }
.icons24 svg { width: 14px; height: 14px; }
.toggle { width: 10px; height: 19px; border-radius: 5px; background: radial-gradient(circle at 5px 5px, #ddd 4px, #3c3c3c 5px); margin-left: auto; margin-right: -2px; margin-bottom: 4px; }
.blend { height: 28px; padding-top: 1px; }
.sel-blend { width: 150px; height: 21px; }
.num { display: flex; align-items: center; color: #d0d0d0; margin-left: auto; }
.num input { width: 40px; height: 17px; margin-left: 4px; border: 1px solid #666; background: #454545; padding-left: 5px; color: #f0f0f0; border-radius: 2px 0 0 2px; }
.num span { width: 15px; height: 17px; display: grid; place-items: center; border: 1px solid #666; border-left: 0; background: #454545; border-radius: 0 2px 2px 0; }
.lock { height: 30px; border: 0; padding-left: 6px; padding-bottom: 2px; }
.fix { width: 46px; color: #d0d0d0; }
.icons22 { display: flex; gap: 8px; color: #dcdcdc; }
.icons22 svg { width: 14px; height: 14px; }
.listwrap { flex: 1; min-height: 0; display: flex; overflow: hidden; }
.list { flex: 1; min-width: 0; list-style: none; margin: -11px 0 0; padding: 0; }
.list li { display: flex; border-bottom: 1px solid #454545; }
.list .thick { border-bottom: 2px solid #4b4b4b; }
.list .full { height: 39px; }
.list .short { height: 25px; }
.list .rest { height: 12px; border: 0; }
.eye { width: 31px; border-right: 1px solid #484848; display: grid; place-items: center; color: #d8d8d8; padding-top: 2px; }
.eye svg { width: 13px; height: 9px; }
.orange .eye { background: #a5620b; }
.red .eye { background: #b04341; box-shadow: 0 2px #83413f; color: #f2cccc; }
.cell { flex: 1; display: flex; align-items: center; padding: 1px 0 0 17px; }
.cell.lv1 { padding-left: 33px; }
.cell.lv2 { padding-left: 49px; }
.cell.lv3 { padding-left: 65px; }
.selected .cell { background: #6a6a6a; }
.tw { padding: 1px; color: #c4c4c4; }
.fold { width: 16px; height: 14px; margin: 0 10px 0 0; color: #dcdcdc; }
.thumb { position: relative; width: 32px; height: 31px; margin: 0 9px 0 2px; border: 1px solid #2c2c2c; background: conic-gradient(#ccc 25%, #fff 0 50%, #ccc 0 75%, #fff 0) 0 0 / 8px 8px; }
.selected .thumb::before { content: ""; position: absolute; inset: -3px; background: linear-gradient(#fff 0 0) 0 0 / 11px 1px, linear-gradient(#fff 0 0) 0 0 / 1px 11px, linear-gradient(#fff 0 0) 100% 0 / 11px 1px, linear-gradient(#fff 0 0) 100% 0 / 1px 11px, linear-gradient(#fff 0 0) 0 100% / 11px 1px, linear-gradient(#fff 0 0) 0 100% / 1px 11px, linear-gradient(#fff 0 0) 100% 100% / 11px 1px, linear-gradient(#fff 0 0) 100% 100% / 1px 11px; background-repeat: no-repeat; }
.badge { position: absolute; right: -1px; bottom: -1px; width: 16px; height: 16px; background: #484848; border: 1px solid #303030; color: #e4e4e4; }
.name { color: #f0f0f0; white-space: nowrap; }
.lay b { height: 445px; margin-top: 155px; }
.lfoot { height: 25px; flex: none; display: flex; align-items: center; gap: 11px; padding-left: 64px; border-top: 1px solid #3a3a3a; color: #dcdcdc; }
.lfoot svg { width: 16px; height: 14px; }
.lfoot em { width: 16px; font: italic 16px/20px "Liberation Serif", serif; }

.rightcol { flex: none; width: 287px; display: flex; flex-direction: column; border: solid #3a3a3a; border-width: 0 1px 1px 2px; min-height: 0; }
.swatches { height: 680px; flex: none; border-bottom: 3px solid #3a3a3a; }
.search { display: flex; align-items: center; gap: 3px; padding: 9px 7px 0 6px; flex: none; }
.search input { flex: 1; min-width: 0; height: 22px; border: 1px solid #6a6a6a; background: #464646; padding-left: 4px; font-size: 12px; color: #ddd; }
.search input::placeholder { color: #8a8a8a; opacity: 1; }
.recent { display: flex; gap: 2px; margin: 9px 0 9px 7px; padding: 1px; background: #424242; align-self: flex-start; flex: none; }
.recent i { width: 16px; height: 16px; }
.palwrap { flex: 1; min-height: 0; overflow: hidden; display: flex; border-top: 1px solid #3f3f3f; }
.pals { flex: 1; min-width: 0; background: #4b4b4b; }
.pal h3 { margin: 0; height: 29px; display: flex; align-items: center; padding-left: 5px; background: #424242; border-bottom: 1px solid #484848; font-size: 12px; font-weight: 400; color: #f0f0f0; }
.chips { display: grid; grid-template-columns: repeat(8, 28px); gap: 2px; padding: 1px 0 1px 22px; }
.chips i { height: 28px; box-shadow: 0 0 0 1px #424242; }
.chips .on { border: 1px solid #1fb4f5; box-shadow: 0 0 0 1px #1fb4f5; }
.pal-s b { height: 448px; margin-top: 1px; }
.pfoot { height: 26px; flex: none; border-top: 2px solid #3f3f3f; display: flex; align-items: center; justify-content: flex-end; gap: 15px; padding-right: 26px; color: #dcdcdc; }
.pfoot svg { width: 14px; height: 14px; }
.props { flex: 1; }
.kind { height: 35px; flex: none; display: flex; align-items: center; gap: 6px; padding: 4px 0 0 10px; border-bottom: 1px solid #444; color: #dcdcdc; }
.kind span { width: 24px; height: 24px; display: grid; place-items: center; background: #383838; border: 1px solid #606060; border-radius: 2px; }
.kind svg { width: 14px; height: 14px; }
.pbody { flex: 1; min-height: 0; display: flex; }
.pgutter { width: 16px; background: #4a4a4a; }
.form { flex: 1; padding: 13px 7px 0 8px; color: #d6d6d6; }
.thead { display: flex; align-items: center; height: 16px; }
.thead strong { width: 173px; }
.thead svg { width: 14px; height: 14px; }
.pair { display: grid; align-items: center; grid-template-columns: 18px 95px 19px 61px; }
.dimsrow { height: 16px; margin-top: 10px; }
.xy { grid-template-columns: 17px 61px 52px 61px; margin-top: 4px; }
.xy label { padding-left: 2px; }
.xy label:nth-of-type(2) { padding-left: 38px; }
.xy input { height: 18px; border: 1px solid #6a6a6a; background: #454545; padding-left: 4px; color: #f0f0f0; min-width: 0; }
.angle { margin: 7px 0 0 -3px; }
.angle > svg { width: 14px; height: 12px; }
.angle input { width: 39px; padding-left: 4px; }
.form p { margin: 18px 0 7px; }
.sel-comp { height: 21px; margin-bottom: 16px; background: #515151; color: #888; border-color: #606060; }
.sel-comp > .i10 { color: #777; }
.wide { display: block; width: 218px; height: 23px; margin-bottom: 4px; border: 1px solid #606060; border-radius: 2px; background: #454545; color: #f0f0f0; }
</style>
